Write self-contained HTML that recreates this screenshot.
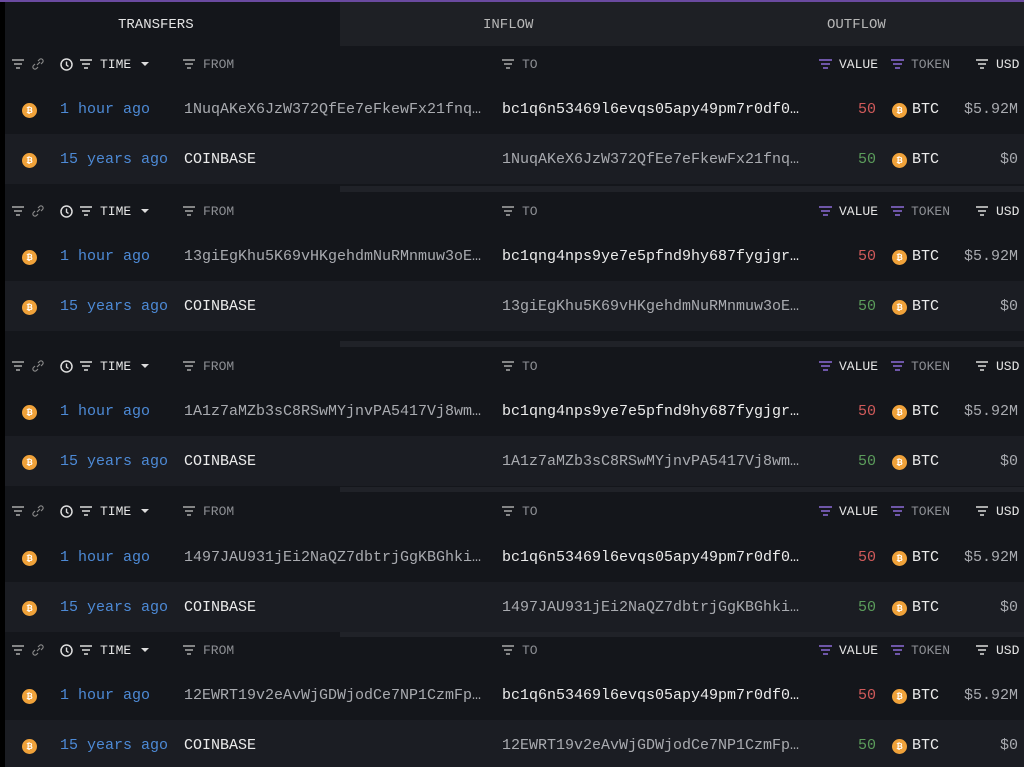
<!DOCTYPE html>
<html><head><meta charset="utf-8"><style>
body{margin:0;width:1024px;height:767px;background:#000;overflow:hidden;font-family:"Liberation Mono",monospace;position:relative}
#m{position:absolute;left:5px;top:0;width:1019px;height:767px;background:#14161b}
.a{position:absolute;white-space:nowrap;line-height:20px;height:20px;margin-top:1px}
.t{font-size:15px}
.h{font-size:13px;color:#8d8f94}
.hb{color:#e6e6e6}
.bl{color:#4d8ad6}.w{color:#ececec}.g{color:#a9abb0}
.r{color:#d05a5a}.gr{color:#5b9c5b}
.coin{position:absolute;width:15px;height:15px;border-radius:50%;background:#f0a23a;color:#fff;font:bold 8px "Liberation Sans",sans-serif;text-align:center;line-height:15px;margin-top:1px}
.bg2{position:absolute;left:5px;width:1019px;background:#1b1d23}
.sep{position:absolute;left:340px;width:684px;height:6px;background:#202228}
svg{position:absolute;margin-top:1px}
</style></head><body>
<div id="m"></div>
<div style="position:absolute;left:0;top:0;width:1024px;height:2px;background:#6a4aa0"></div>
<div style="position:absolute;left:340px;top:2px;width:684px;height:44px;background:#1e2025"></div>
<div class="a t" style="left:118px;top:14px;font-size:14px;color:#e4e4e4">TRANSFERS</div>
<div class="a t" style="left:483px;top:14px;font-size:14px;color:#b8b8b8">INFLOW</div>
<div class="a t" style="left:827px;top:14px;font-size:14px;color:#b8b8b8">OUTFLOW</div>

<div class="bg2" style="top:134px;height:50px"></div>
<div class="bg2" style="top:281px;height:50px"></div>
<div class="bg2" style="top:436px;height:50px"></div>
<div class="bg2" style="top:582px;height:50px"></div>
<div class="bg2" style="top:720px;height:47px"></div>
<div class="sep" style="top:186px"></div>
<div class="sep" style="top:341px"></div>
<div class="sep" style="top:487px;height:5px"></div>
<div class="sep" style="top:632px;height:5px"></div>

<!-- Block 1 -->
<div style="position:absolute;left:0;top:54px;width:1024px;height:20px">
<svg style="left:12px;top:4px" width="12" height="10"><path d="M0 1h12M2 5h8M4 9h4" stroke="#aaa" stroke-width="1.5"/></svg>
<svg style="left:32px;top:3px" width="12" height="12"><path d="M5 7l3-3M3 6l-1.5 1.5a2 2 0 0 0 3 3L6 9M9 6l1.5-1.5a2 2 0 0 0-3-3L6 3" stroke="#888" fill="none" stroke-width="1.2"/></svg>
<svg style="left:60px;top:3px" width="13" height="13"><circle cx="6.5" cy="6.5" r="5.5" stroke="#ddd" fill="none" stroke-width="1.5"/><path d="M6.5 3.5v3.5l2 1.5" stroke="#ddd" fill="none" stroke-width="1.4"/></svg>
<svg style="left:80px;top:4px" width="12" height="10"><path d="M0 1h12M2 5h8M4 9h4" stroke="#ddd" stroke-width="1.5"/></svg>
<div class="a h hb" style="left:100px;top:0">TIME</div>
<svg style="left:141px;top:7px" width="8" height="5"><path d="M0 0h8L4 4z" fill="#ddd"/></svg>
<svg style="left:183px;top:4px" width="12" height="10"><path d="M0 1h12M2 5h8M4 9h4" stroke="#aaa" stroke-width="1.5"/></svg>
<div class="a h" style="left:203px;top:0">FROM</div>
<svg style="left:502px;top:4px" width="12" height="10"><path d="M0 1h12M2 5h8M4 9h4" stroke="#aaa" stroke-width="1.5"/></svg>
<div class="a h" style="left:522px;top:0">TO</div>
<svg style="left:819px;top:4px" width="13" height="10"><path d="M0 1h13M2 5h9M4 9h5" stroke="#8b6cd8" stroke-width="1.5"/></svg>
<div class="a h hb" style="left:839px;top:0">VALUE</div>
<svg style="left:891px;top:4px" width="13" height="10"><path d="M0 1h13M2 5h9M4 9h5" stroke="#8b6cd8" stroke-width="1.5"/></svg>
<div class="a h" style="left:911px;top:0">TOKEN</div>
<svg style="left:976px;top:4px" width="12" height="10"><path d="M0 1h12M2 5h8M4 9h4" stroke="#ddd" stroke-width="1.5"/></svg>
<div class="a h hb" style="left:996px;top:0">USD</div>
</div>
<div class="coin" style="left:22px;top:102px">₿</div><div class="a t bl" style="left:60px;top:99px">1 hour ago</div><div class="a t g" style="left:184px;top:99px">1NuqAKeX6JzW372QfEe7eFkewFx21fnq…</div><div class="a t w" style="left:502px;top:99px">bc1q6n53469l6evqs05apy49pm7r0df0…</div><div class="a t r" style="left:858px;top:99px">50</div><div class="coin" style="left:892px;top:102px">₿</div><div class="a t w" style="left:912px;top:99px">BTC</div><div class="a t g" style="right:6px;top:99px">$5.92M</div>
<div class="coin" style="left:22px;top:152px">₿</div><div class="a t bl" style="left:60px;top:149px">15 years ago</div><div class="a t w" style="left:184px;top:149px">COINBASE</div><div class="a t g" style="left:502px;top:149px">1NuqAKeX6JzW372QfEe7eFkewFx21fnq…</div><div class="a t gr" style="left:858px;top:149px">50</div><div class="coin" style="left:892px;top:152px">₿</div><div class="a t w" style="left:912px;top:149px">BTC</div><div class="a t g" style="right:6px;top:149px">$0</div>

<!-- Block 2 -->
<div style="position:absolute;left:0;top:201px;width:1024px;height:20px">
<svg style="left:12px;top:4px" width="12" height="10"><path d="M0 1h12M2 5h8M4 9h4" stroke="#aaa" stroke-width="1.5"/></svg>
<svg style="left:32px;top:3px" width="12" height="12"><path d="M5 7l3-3M3 6l-1.5 1.5a2 2 0 0 0 3 3L6 9M9 6l1.5-1.5a2 2 0 0 0-3-3L6 3" stroke="#888" fill="none" stroke-width="1.2"/></svg>
<svg style="left:60px;top:3px" width="13" height="13"><circle cx="6.5" cy="6.5" r="5.5" stroke="#ddd" fill="none" stroke-width="1.5"/><path d="M6.5 3.5v3.5l2 1.5" stroke="#ddd" fill="none" stroke-width="1.4"/></svg>
<svg style="left:80px;top:4px" width="12" height="10"><path d="M0 1h12M2 5h8M4 9h4" stroke="#ddd" stroke-width="1.5"/></svg>
<div class="a h hb" style="left:100px;top:0">TIME</div>
<svg style="left:141px;top:7px" width="8" height="5"><path d="M0 0h8L4 4z" fill="#ddd"/></svg>
<svg style="left:183px;top:4px" width="12" height="10"><path d="M0 1h12M2 5h8M4 9h4" stroke="#aaa" stroke-width="1.5"/></svg>
<div class="a h" style="left:203px;top:0">FROM</div>
<svg style="left:502px;top:4px" width="12" height="10"><path d="M0 1h12M2 5h8M4 9h4" stroke="#aaa" stroke-width="1.5"/></svg>
<div class="a h" style="left:522px;top:0">TO</div>
<svg style="left:819px;top:4px" width="13" height="10"><path d="M0 1h13M2 5h9M4 9h5" stroke="#8b6cd8" stroke-width="1.5"/></svg>
<div class="a h hb" style="left:839px;top:0">VALUE</div>
<svg style="left:891px;top:4px" width="13" height="10"><path d="M0 1h13M2 5h9M4 9h5" stroke="#8b6cd8" stroke-width="1.5"/></svg>
<div class="a h" style="left:911px;top:0">TOKEN</div>
<svg style="left:976px;top:4px" width="12" height="10"><path d="M0 1h12M2 5h8M4 9h4" stroke="#ddd" stroke-width="1.5"/></svg>
<div class="a h hb" style="left:996px;top:0">USD</div>
</div>
<div class="coin" style="left:22px;top:249px">₿</div><div class="a t bl" style="left:60px;top:246px">1 hour ago</div><div class="a t g" style="left:184px;top:246px">13giEgKhu5K69vHKgehdmNuRMnmuw3oE…</div><div class="a t w" style="left:502px;top:246px">bc1qng4nps9ye7e5pfnd9hy687fygjgr…</div><div class="a t r" style="left:858px;top:246px">50</div><div class="coin" style="left:892px;top:249px">₿</div><div class="a t w" style="left:912px;top:246px">BTC</div><div class="a t g" style="right:6px;top:246px">$5.92M</div>
<div class="coin" style="left:22px;top:299px">₿</div><div class="a t bl" style="left:60px;top:296px">15 years ago</div><div class="a t w" style="left:184px;top:296px">COINBASE</div><div class="a t g" style="left:502px;top:296px">13giEgKhu5K69vHKgehdmNuRMnmuw3oE…</div><div class="a t gr" style="left:858px;top:296px">50</div><div class="coin" style="left:892px;top:299px">₿</div><div class="a t w" style="left:912px;top:296px">BTC</div><div class="a t g" style="right:6px;top:296px">$0</div>

<!-- Block 3 -->
<div style="position:absolute;left:0;top:356px;width:1024px;height:20px">
<svg style="left:12px;top:4px" width="12" height="10"><path d="M0 1h12M2 5h8M4 9h4" stroke="#aaa" stroke-width="1.5"/></svg>
<svg style="left:32px;top:3px" width="12" height="12"><path d="M5 7l3-3M3 6l-1.5 1.5a2 2 0 0 0 3 3L6 9M9 6l1.5-1.5a2 2 0 0 0-3-3L6 3" stroke="#888" fill="none" stroke-width="1.2"/></svg>
<svg style="left:60px;top:3px" width="13" height="13"><circle cx="6.5" cy="6.5" r="5.5" stroke="#ddd" fill="none" stroke-width="1.5"/><path d="M6.5 3.5v3.5l2 1.5" stroke="#ddd" fill="none" stroke-width="1.4"/></svg>
<svg style="left:80px;top:4px" width="12" height="10"><path d="M0 1h12M2 5h8M4 9h4" stroke="#ddd" stroke-width="1.5"/></svg>
<div class="a h hb" style="left:100px;top:0">TIME</div>
<svg style="left:141px;top:7px" width="8" height="5"><path d="M0 0h8L4 4z" fill="#ddd"/></svg>
<svg style="left:183px;top:4px" width="12" height="10"><path d="M0 1h12M2 5h8M4 9h4" stroke="#aaa" stroke-width="1.5"/></svg>
<div class="a h" style="left:203px;top:0">FROM</div>
<svg style="left:502px;top:4px" width="12" height="10"><path d="M0 1h12M2 5h8M4 9h4" stroke="#aaa" stroke-width="1.5"/></svg>
<div class="a h" style="left:522px;top:0">TO</div>
<svg style="left:819px;top:4px" width="13" height="10"><path d="M0 1h13M2 5h9M4 9h5" stroke="#8b6cd8" stroke-width="1.5"/></svg>
<div class="a h hb" style="left:839px;top:0">VALUE</div>
<svg style="left:891px;top:4px" width="13" height="10"><path d="M0 1h13M2 5h9M4 9h5" stroke="#8b6cd8" stroke-width="1.5"/></svg>
<div class="a h" style="left:911px;top:0">TOKEN</div>
<svg style="left:976px;top:4px" width="12" height="10"><path d="M0 1h12M2 5h8M4 9h4" stroke="#ddd" stroke-width="1.5"/></svg>
<div class="a h hb" style="left:996px;top:0">USD</div>
</div>
<div class="coin" style="left:22px;top:404px">₿</div><div class="a t bl" style="left:60px;top:401px">1 hour ago</div><div class="a t g" style="left:184px;top:401px">1A1z7aMZb3sC8RSwMYjnvPA5417Vj8wm…</div><div class="a t w" style="left:502px;top:401px">bc1qng4nps9ye7e5pfnd9hy687fygjgr…</div><div class="a t r" style="left:858px;top:401px">50</div><div class="coin" style="left:892px;top:404px">₿</div><div class="a t w" style="left:912px;top:401px">BTC</div><div class="a t g" style="right:6px;top:401px">$5.92M</div>
<div class="coin" style="left:22px;top:454px">₿</div><div class="a t bl" style="left:60px;top:451px">15 years ago</div><div class="a t w" style="left:184px;top:451px">COINBASE</div><div class="a t g" style="left:502px;top:451px">1A1z7aMZb3sC8RSwMYjnvPA5417Vj8wm…</div><div class="a t gr" style="left:858px;top:451px">50</div><div class="coin" style="left:892px;top:454px">₿</div><div class="a t w" style="left:912px;top:451px">BTC</div><div class="a t g" style="right:6px;top:451px">$0</div>

<!-- Block 4 -->
<div style="position:absolute;left:0;top:501px;width:1024px;height:20px">
<svg style="left:12px;top:4px" width="12" height="10"><path d="M0 1h12M2 5h8M4 9h4" stroke="#aaa" stroke-width="1.5"/></svg>
<svg style="left:32px;top:3px" width="12" height="12"><path d="M5 7l3-3M3 6l-1.5 1.5a2 2 0 0 0 3 3L6 9M9 6l1.5-1.5a2 2 0 0 0-3-3L6 3" stroke="#888" fill="none" stroke-width="1.2"/></svg>
<svg style="left:60px;top:3px" width="13" height="13"><circle cx="6.5" cy="6.5" r="5.5" stroke="#ddd" fill="none" stroke-width="1.5"/><path d="M6.5 3.5v3.5l2 1.5" stroke="#ddd" fill="none" stroke-width="1.4"/></svg>
<svg style="left:80px;top:4px" width="12" height="10"><path d="M0 1h12M2 5h8M4 9h4" stroke="#ddd" stroke-width="1.5"/></svg>
<div class="a h hb" style="left:100px;top:0">TIME</div>
<svg style="left:141px;top:7px" width="8" height="5"><path d="M0 0h8L4 4z" fill="#ddd"/></svg>
<svg style="left:183px;top:4px" width="12" height="10"><path d="M0 1h12M2 5h8M4 9h4" stroke="#aaa" stroke-width="1.5"/></svg>
<div class="a h" style="left:203px;top:0">FROM</div>
<svg style="left:502px;top:4px" width="12" height="10"><path d="M0 1h12M2 5h8M4 9h4" stroke="#aaa" stroke-width="1.5"/></svg>
<div class="a h" style="left:522px;top:0">TO</div>
<svg style="left:819px;top:4px" width="13" height="10"><path d="M0 1h13M2 5h9M4 9h5" stroke="#8b6cd8" stroke-width="1.5"/></svg>
<div class="a h hb" style="left:839px;top:0">VALUE</div>
<svg style="left:891px;top:4px" width="13" height="10"><path d="M0 1h13M2 5h9M4 9h5" stroke="#8b6cd8" stroke-width="1.5"/></svg>
<div class="a h" style="left:911px;top:0">TOKEN</div>
<svg style="left:976px;top:4px" width="12" height="10"><path d="M0 1h12M2 5h8M4 9h4" stroke="#ddd" stroke-width="1.5"/></svg>
<div class="a h hb" style="left:996px;top:0">USD</div>
</div>
<div class="coin" style="left:22px;top:550px">₿</div><div class="a t bl" style="left:60px;top:547px">1 hour ago</div><div class="a t g" style="left:184px;top:547px">1497JAU931jEi2NaQZ7dbtrjGgKBGhki…</div><div class="a t w" style="left:502px;top:547px">bc1q6n53469l6evqs05apy49pm7r0df0…</div><div class="a t r" style="left:858px;top:547px">50</div><div class="coin" style="left:892px;top:550px">₿</div><div class="a t w" style="left:912px;top:547px">BTC</div><div class="a t g" style="right:6px;top:547px">$5.92M</div>
<div class="coin" style="left:22px;top:600px">₿</div><div class="a t bl" style="left:60px;top:597px">15 years ago</div><div class="a t w" style="left:184px;top:597px">COINBASE</div><div class="a t g" style="left:502px;top:597px">1497JAU931jEi2NaQZ7dbtrjGgKBGhki…</div><div class="a t gr" style="left:858px;top:597px">50</div><div class="coin" style="left:892px;top:600px">₿</div><div class="a t w" style="left:912px;top:597px">BTC</div><div class="a t g" style="right:6px;top:597px">$0</div>

<!-- Block 5 -->
<div style="position:absolute;left:0;top:640px;width:1024px;height:20px">
<svg style="left:12px;top:4px" width="12" height="10"><path d="M0 1h12M2 5h8M4 9h4" stroke="#aaa" stroke-width="1.5"/></svg>
<svg style="left:32px;top:3px" width="12" height="12"><path d="M5 7l3-3M3 6l-1.5 1.5a2 2 0 0 0 3 3L6 9M9 6l1.5-1.5a2 2 0 0 0-3-3L6 3" stroke="#888" fill="none" stroke-width="1.2"/></svg>
<svg style="left:60px;top:3px" width="13" height="13"><circle cx="6.5" cy="6.5" r="5.5" stroke="#ddd" fill="none" stroke-width="1.5"/><path d="M6.5 3.5v3.5l2 1.5" stroke="#ddd" fill="none" stroke-width="1.4"/></svg>
<svg style="left:80px;top:4px" width="12" height="10"><path d="M0 1h12M2 5h8M4 9h4" stroke="#ddd" stroke-width="1.5"/></svg>
<div class="a h hb" style="left:100px;top:0">TIME</div>
<svg style="left:141px;top:7px" width="8" height="5"><path d="M0 0h8L4 4z" fill="#ddd"/></svg>
<svg style="left:183px;top:4px" width="12" height="10"><path d="M0 1h12M2 5h8M4 9h4" stroke="#aaa" stroke-width="1.5"/></svg>
<div class="a h" style="left:203px;top:0">FROM</div>
<svg style="left:502px;top:4px" width="12" height="10"><path d="M0 1h12M2 5h8M4 9h4" stroke="#aaa" stroke-width="1.5"/></svg>
<div class="a h" style="left:522px;top:0">TO</div>
<svg style="left:819px;top:4px" width="13" height="10"><path d="M0 1h13M2 5h9M4 9h5" stroke="#8b6cd8" stroke-width="1.5"/></svg>
<div class="a h hb" style="left:839px;top:0">VALUE</div>
<svg style="left:891px;top:4px" width="13" height="10"><path d="M0 1h13M2 5h9M4 9h5" stroke="#8b6cd8" stroke-width="1.5"/></svg>
<div class="a h" style="left:911px;top:0">TOKEN</div>
<svg style="left:976px;top:4px" width="12" height="10"><path d="M0 1h12M2 5h8M4 9h4" stroke="#ddd" stroke-width="1.5"/></svg>
<div class="a h hb" style="left:996px;top:0">USD</div>
</div>
<div class="coin" style="left:22px;top:688px">₿</div><div class="a t bl" style="left:60px;top:685px">1 hour ago</div><div class="a t g" style="left:184px;top:685px">12EWRT19v2eAvWjGDWjodCe7NP1CzmFp…</div><div class="a t w" style="left:502px;top:685px">bc1q6n53469l6evqs05apy49pm7r0df0…</div><div class="a t r" style="left:858px;top:685px">50</div><div class="coin" style="left:892px;top:688px">₿</div><div class="a t w" style="left:912px;top:685px">BTC</div><div class="a t g" style="right:6px;top:685px">$5.92M</div>
<div class="coin" style="left:22px;top:738px">₿</div><div class="a t bl" style="left:60px;top:735px">15 years ago</div><div class="a t w" style="left:184px;top:735px">COINBASE</div><div class="a t g" style="left:502px;top:735px">12EWRT19v2eAvWjGDWjodCe7NP1CzmFp…</div><div class="a t gr" style="left:858px;top:735px">50</div><div class="coin" style="left:892px;top:738px">₿</div><div class="a t w" style="left:912px;top:735px">BTC</div><div class="a t g" style="right:6px;top:735px">$0</div>
</body></html>
